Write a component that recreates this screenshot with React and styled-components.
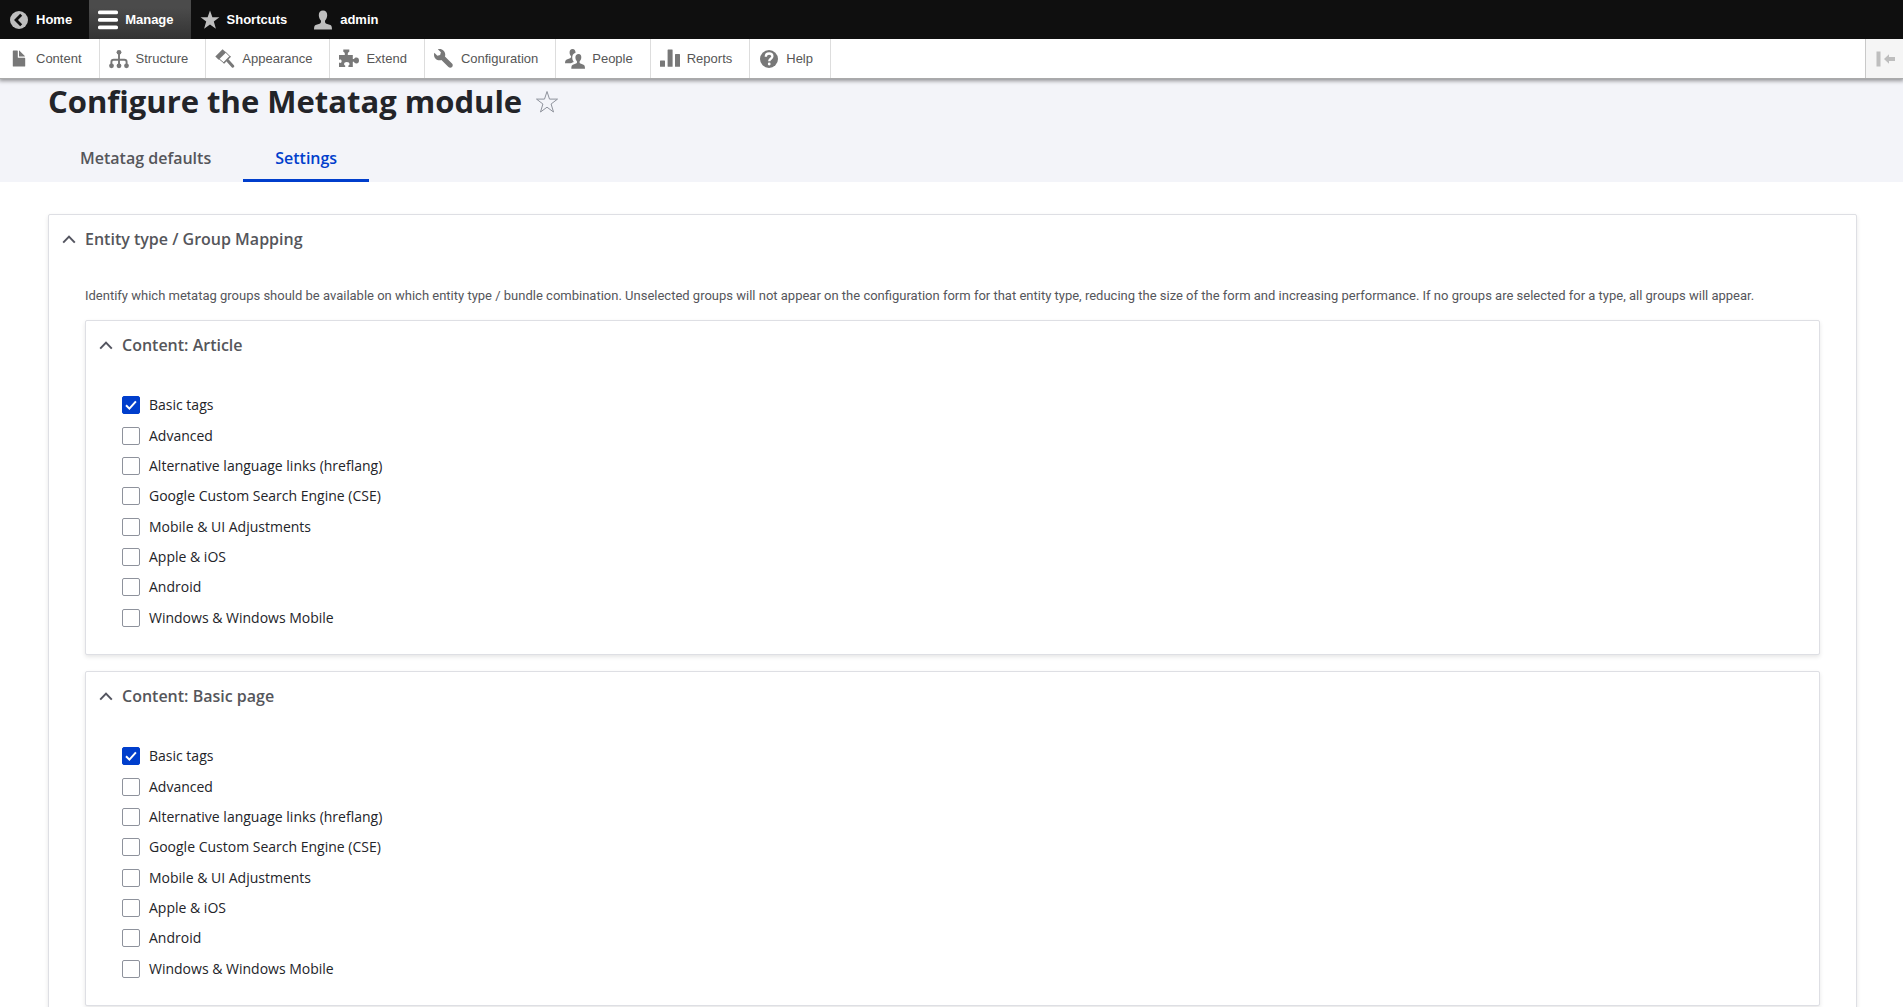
import React, { useState } from "react";
import styled, { createGlobalStyle } from "styled-components";

const topLinks = [
  { label: "Home", icon: "back" },
  { label: "Manage", icon: "menu", active: true },
  { label: "Shortcuts", icon: "star" },
  { label: "admin", icon: "person" },
];

const trayLinks = [
  { label: "Content", icon: "file" },
  { label: "Structure", icon: "structure" },
  { label: "Appearance", icon: "brush" },
  { label: "Extend", icon: "puzzle" },
  { label: "Configuration", icon: "wrench" },
  { label: "People", icon: "people" },
  { label: "Reports", icon: "chart" },
  { label: "Help", icon: "help" },
];

const tagGroups = [
  "Basic tags",
  "Advanced",
  "Alternative language links (hreflang)",
  "Google Custom Search Engine (CSE)",
  "Mobile & UI Adjustments",
  "Apple & iOS",
  "Android",
  "Windows & Windows Mobile",
];

const bundles = [
  { id: "article", title: "Content: Article" },
  { id: "page", title: "Content: Basic page" },
];

const personPath =
  "M10 0.5c-2.700 0-4.300 2-4.200 4.700 0.100 2.200 0.900 4.100 2.100 5.200 0.300 1.500 0 2.800-1.300 3.300l-4 1.400c-1 0.400-1.500 1.400-1.600 4.400h18c-0.100-3-0.600-4-1.600-4.400l-4-1.400c-1.300-0.500-1.600-1.800-1.300-3.300 1.200-1.100 2-3 2.100-5.200 0.100-2.700-1.500-4.700-4.200-4.700z";

//all drawings share a 20x20 box
const icons = {
  back: (
    <>
      <circle cx="10" cy="10" r="9" />
      <path d="M12.200 4.800L7 10l5.200 5.200" fill="none" stroke="#0f0f0f" strokeWidth="2.800" />
    </>
  ),
  menu: (
    <>
      <rect y="0.500" width="20" height="3.800" rx="1.600" />
      <rect y="8" width="20" height="3.800" rx="1.600" />
      <rect y="15.500" width="20" height="3.800" rx="1.600" />
    </>
  ),
  star: <path d="M10 0.500l2.400 6.700h7l-5.600 4.400 2.100 7.200L10 14.600l-5.900 4.200 2.100-7.200L0.600 7.200h7z" />,
  person: <path d={personPath} />,
  file: (
    <path d="M15.600 8.800H9.400a.6.600 0 0 1-.6-.6V2a.6.600 0 0 0-.6-.6H4.400a.6.600 0 0 0-.6.600v15a.6.600 0 0 0 .6.600h11.200a.6.600 0 0 0 .6-.6V9.400a.6.600 0 0 0-.6-.6zM10.600 7.500h5c.4 0 .5-.2.200-.5L10.500 1.700c-.3-.3-.5-.1-.5.200v5c0 .3.300.6.600.6z" />
  ),
  structure: (
    <>
      <path
        d="M2.400 16v-3q0-2.300 2.300-2.300h10.600q2.300 0 2.300 2.300v3M10 4v12"
        fill="none"
        stroke="currentColor"
        strokeWidth="1.900"
      />
      <circle cx="10" cy="3.300" r="2.400" />
      <circle cx="2.500" cy="16.800" r="2.400" />
      <circle cx="10" cy="16.800" r="2.400" />
      <circle cx="17.500" cy="16.800" r="2.400" />
    </>
  ),
  brush: (
    <>
      <path d="M7.600 0.300L11 3.600 3.700 10.800 0.300 7.600z" />
      <path
        d="M10 2.600L15 7.600M3.300 9.200L9 14"
        fill="none"
        stroke="currentColor"
        strokeWidth="1"
      />
      <path d="M15.400 7.200l-6.800 7" fill="none" stroke="currentColor" strokeWidth="1.600" />
      <path
        d="M12.600 11.600l5.200 5.600"
        fill="none"
        stroke="currentColor"
        strokeWidth="3"
        strokeLinecap="round"
      />
    </>
  ),
  puzzle: (
    <path d="M4.300 0.600h6v2.200c-1.300.6-1.500 1.300-1.500 2.300V6h5v4.100h1.100c.5-1.100 1.200-1.700 2.500-1.700 1.700 0 2.600 1.300 2.600 3s-.9 3-2.600 3c-1.300 0-2-.6-2.500-1.700h-1.100V18H9.400v-1.500c.8-.4 1.100-.9 1.100-1.600 0-1.200-.9-2-2.700-2s-2.700.8-2.700 2c0 .7.300 1.200 1.100 1.600V18H0v-4.400c.5.300.8.400 1.200.4.900 0 1.400-.7 1.400-1.700s-.5-1.700-1.400-1.700c-.4 0-.7.100-1.200.4V6h5.800v-.9c0-1-.2-1.700-1.500-2.300z" />
  ),
  wrench: (
    <g transform="scale(1.250)">
      <path d="M14.416 11.586l-.01-.008v-.001l-5.656-5.656c.15-.449.252-.921.252-1.421 0-2.485-2.016-4.500-4.502-4.500-.505 0-.981.102-1.434.255l2.431 2.431-.588 2.196-2.196.588-2.445-2.445c-.162.464-.268.956-.268 1.475 0 2.486 2.014 4.500 4.500 4.500.5 0 .972-.102 1.421-.251l5.667 5.665c.781.781 2.047.781 2.828 0s.781-2.047 0-2.828z" />
    </g>
  ),
  people: (
    <>
      <path d="M7.600 0c-2 0-3.100 1.400-3 3.400 0 1.600.6 2.800 1.400 3.600.2 1 0 1.800-.9 2.300l-3.300 1.300C.6 11.100.1 12 0 14.200h5.800c1-.6 2.400-.9 3-1.300C7.300 10.900 7 8.600 7.400 6.900 7.800 5.300 9 4.300 10.500 4 10.700 1.700 9.700 0 7.600 0z" />
      <path d="M13.600 5c-2 0-3.300 1.400-3.200 3.600.1 1.700.7 2.900 1.500 3.700.3 1.100 0 2-.9 2.300l-3.200 1.200c-1 .4-1.400 1.200-1.500 4H20c-.1-2.800-.5-3.600-1.500-4l-3-1.200c-.9-.3-1.100-1.200-.8-2.300.8-.8 1.500-2 1.600-3.700C16.400 6.400 15.600 5 13.600 5z" />
    </>
  ),
  chart: (
    <>
      <rect y="11.400" width="5" height="6.400" rx="0.500" />
      <rect x="7.600" y="0.400" width="5" height="17.400" rx="0.500" />
      <rect x="15" y="5" width="5" height="12.800" rx="0.500" />
    </>
  ),
  help: (
    <>
      <circle cx="10" cy="10" r="9" />
      <path
        d="M6.800 7.800c0-2.200 1.300-3.300 3.300-3.300s3.300 1.100 3.300 2.800c0 2.400-3.200 2.500-3.200 4.900"
        fill="none"
        stroke="#fff"
        strokeWidth="2.300"
      />
      <circle cx="10.200" cy="15" r="1.400" fill="#fff" />
    </>
  ),
};

function Icon({ name }) {
  return (
    <IconSvg viewBox="0 0 20 20" aria-hidden="true">
      {icons[name]}
    </IconSvg>
  );
}

function Panel({ title, children }) {
  return (
    <PanelBox open>
      <PanelTitle>
        <Chevron viewBox="0 0 14 14" aria-hidden="true">
          <path d="M1.200 10.600L7 4.600 12.800 10.600" />
        </Chevron>
        {title}
      </PanelTitle>
      <PanelBody>{children}</PanelBody>
    </PanelBox>
  );
}

function TagGroups({ bundle }) {
  const [checked, setChecked] = useState(["Basic tags"]);

  const toggle = (name) => {
    setChecked(
      checked.includes(name)
        ? checked.filter((item) => item !== name)
        : [...checked, name]
    );
  };

  return (
    <TagList>
      {tagGroups.map((name, i) => (
        <TagRow key={name}>
          <CheckHolder>
            <Checkbox
              type="checkbox"
              id={`${bundle}-${i}`}
              checked={checked.includes(name)}
              onChange={() => toggle(name)}
            />
            {checked.includes(name) && (
              <Tick viewBox="0 0 18 18" aria-hidden="true">
                <path d="M4 9.200l3.400 3.400 6.500-7.300" />
              </Tick>
            )}
          </CheckHolder>
          <label htmlFor={`${bundle}-${i}`}>{name}</label>
        </TagRow>
      ))}
    </TagList>
  );
}

function App() {
  return (
    <>
      <GlobalStyle />
      <Toolbar>
        <TopBar>
          {topLinks.map((link) => (
            <TopLink href="#" key={link.label} $active={link.active}>
              <Icon name={link.icon} />
              {link.label}
            </TopLink>
          ))}
        </TopBar>
        <Tray>
          {trayLinks.map((link) => (
            <TrayLink href="#" key={link.label}>
              <Icon name={link.icon} />
              {link.label}
            </TrayLink>
          ))}
          <OrientationButton aria-label="Vertical orientation">
            <svg width="20" height="20" viewBox="0 0 20 20" aria-hidden="true">
              <path d="M0.500 2.500h4v15h-4zM8 10l5-4.800v2.800h6v4h-6v2.800z" fill="#bebebe" />
            </svg>
          </OrientationButton>
        </Tray>
      </Toolbar>

      <Header>
        <TitleRow>
          <h1>Configure the Metatag module</h1>
          <StarButton aria-label="Add to Default shortcuts">
            <svg width="24" height="24" viewBox="0 0 24 24" aria-hidden="true">
              <path d="M13 2.500l2.500 7.600h8l-6.400 4.900 2.400 8L13 18.200l-6.500 4.800 2.400-8-6.400-4.900h8z" />
            </svg>
          </StarButton>
        </TitleRow>
        <Tabs>
          <Tab href="#">Metatag defaults</Tab>
          <Tab href="#" $active>
            Settings
          </Tab>
        </Tabs>
      </Header>

      <Main>
        <Panel title="Entity type / Group Mapping">
          <Description>
            Identify which metatag groups should be available on which entity
            type / bundle combination. Unselected groups will not appear on the
            configuration form for that entity type, reducing the size of the
            form and increasing performance. If no groups are selected for a
            type, all groups will appear.
          </Description>
          <PanelStack>
            {bundles.map((bundle) => (
              <Panel title={bundle.title} key={bundle.id}>
                <TagGroups bundle={bundle.id} />
              </Panel>
            ))}
          </PanelStack>
        </Panel>
      </Main>
    </>
  );
}

const GlobalStyle = createGlobalStyle`
  * {
    box-sizing: border-box;
  }
  body {
    margin: 0;
    background: #fff;
    color: #232429;
    font-family: "Open Sans", "Noto Sans", sans-serif;
    font-size: 14px;
    line-height: 20px;
  }
`;

const IconSvg = styled.svg`
  width: 20px;
  height: 20px;
  flex: none;
  fill: currentColor;
`;

const Toolbar = styled.nav`
  position: relative;
  font-family: "Liberation Sans", Arial, sans-serif;
  font-size: 13px;
  box-shadow: 0 1px 4px 1px rgba(0, 0, 0, 0.4);
`;

const TopBar = styled.div`
  display: flex;
  height: 39px;
  background: #0f0f0f;
`;

const TopLink = styled.a`
  display: flex;
  align-items: center;
  gap: 7px;
  padding: 0 17px 0 9px;
  color: #fff;
  font-weight: bold;
  text-decoration: none;
  background: ${(p) =>
    p.$active ? "linear-gradient(#4b4b4b 20%, #333 100%)" : "none"};

  svg {
    color: ${(p) => (p.$active ? "#fff" : "#bebebe")};
  }
`;

const Tray = styled.div`
  display: flex;
  height: 40px;
  background: #fff;
  border-bottom: 1px solid #aaa;
`;

const TrayLink = styled.a`
  display: flex;
  align-items: center;
  gap: 7px;
  padding: 0 17px 0 9px;
  border-right: 1px solid #ddd;
  color: #565656;
  text-decoration: none;

  svg {
    color: #787878;
  }
`;

const OrientationButton = styled.button`
  display: flex;
  align-items: center;
  margin-left: auto;
  padding: 0 7px 0 10px;
  border: none;
  border-left: 1px solid #c9c9c9;
  background: #f5f5f5;
  cursor: pointer;
`;

const Header = styled.header`
  padding: 2px 48px 0;
  background: #f3f4f9;
`;

const TitleRow = styled.div`
  display: flex;
  align-items: center;
  gap: 12px;
  margin-bottom: 16px;

  h1 {
    margin: 0;
    font-size: 31px;
    font-weight: bold;
    line-height: 40px;
  }
`;

const StarButton = styled.button`
  display: flex;
  padding: 0;
  border: none;
  background: none;
  cursor: pointer;

  path {
    fill: none;
    stroke: #8e929c;
    stroke-width: 1;
  }
`;

const Tabs = styled.div`
  display: flex;
`;

const Tab = styled.a`
  padding: 9px 32px;
  border-bottom: 3px solid ${(p) => (p.$active ? "#003ecc" : "transparent")};
  color: ${(p) => (p.$active ? "#003ecc" : "#55565b")};
  font-size: 16px;
  font-weight: 600;
  line-height: 24px;
  text-decoration: none;
`;

const Main = styled.main`
  padding: 32px 46px 32px 48px;
`;

const PanelBox = styled.details`
  border: 1px solid #dedfe4;
  border-radius: 2px;
  background: #fff;
  box-shadow: 0 2px 4px rgba(0, 0, 0, 0.1);
`;

const PanelTitle = styled.summary`
  display: flex;
  align-items: center;
  gap: 9px;
  padding: 12px 13px;
  color: #55565b;
  font-size: 16px;
  font-weight: 600;
  line-height: 24px;
  list-style: none;
  cursor: pointer;
`;

const Chevron = styled.svg`
  width: 14px;
  height: 14px;

  path {
    fill: none;
    stroke: #545560;
    stroke-width: 2;
  }
`;

const PanelBody = styled.div`
  padding: 21px 36px;
`;

const PanelStack = styled.div`
  display: grid;
  gap: 16px;
`;

const Description = styled.p`
  margin: 0 0 12px;
  color: #55565b;
  font-family: Roboto, "Noto Sans", sans-serif;
  font-size: 13px;
  line-height: 24px;
`;

const TagList = styled.div`
  display: grid;
  grid-auto-rows: 1fr;
  min-height: 243px;
`;

const TagRow = styled.div`
  display: flex;
  align-items: center;
  gap: 9px;
`;

const CheckHolder = styled.span`
  display: grid;
  width: 18px;
  height: 18px;

  > * {
    grid-area: 1 / 1;
  }
`;

const Checkbox = styled.input`
  appearance: none;
  width: 18px;
  height: 18px;
  margin: 0;
  border: 1px solid #8e929c;
  border-radius: 2px;
  background: #fff;

  &:checked {
    border-color: #003ecc;
    background: #003ecc;
  }
`;

const Tick = styled.svg`
  pointer-events: none;

  path {
    fill: none;
    stroke: #fff;
    stroke-width: 2;
  }
`;

export default App;
